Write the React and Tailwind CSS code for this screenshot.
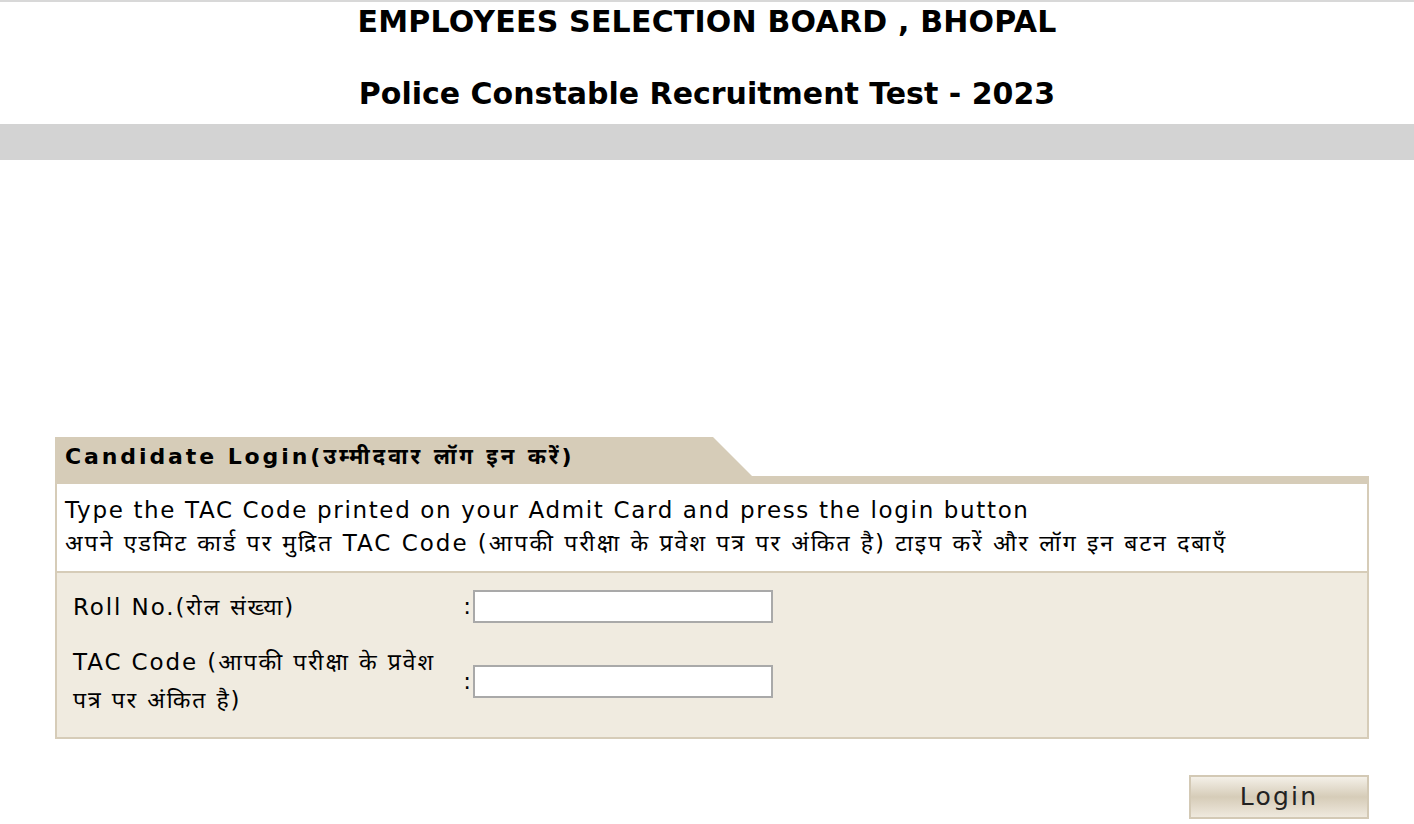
import React from "react";

export default function App() {
  return (
    <div className="min-h-screen bg-white text-black [font-family:'DejaVu_Sans','Noto_Sans',sans-serif]">
      <div className="h-[2px] bg-[#d8d8d8]" />
      <h1 className="mt-[5px] text-center text-[30px] font-bold leading-[30px] tracking-[0.2px]">
        EMPLOYEES SELECTION BOARD , BHOPAL
      </h1>
      <h2 className="mt-[42px] text-center text-[30px] font-bold leading-[30px]">
        Police Constable Recruitment Test - 2023
      </h2>
      <div className="mt-[15px] h-[36px] bg-[#d3d3d3]" />

      <div className="pl-[55px] pr-[45px] pt-[277px]">
        <div className="flex h-[39px] w-[697px] items-center bg-[#d6ccb8] pl-[10px] text-[22px] font-bold tracking-[2.9px] [clip-path:polygon(0_0,calc(100%-39px)_0,100%_100%,0_100%)]">
          Candidate Login(उम्मीदवार लॉग इन करें)
        </div>
        <div className="border-x-2 border-t-8 border-b-2 border-[#d6ccb8]">
          <div className="border-b-2 border-[#d6ccb8] bg-white px-[8px] pt-[10px] pb-[11px] text-[23px] leading-[33px] tracking-[1.65px]">
            <div>Type the TAC Code printed on your Admit Card and press the login button</div>
            <div className="tracking-[2px]">
              अपने एडमिट कार्ड पर मुद्रित TAC Code (आपकी परीक्षा के प्रवेश पत्र पर अंकित है) टाइप करें और लॉग इन बटन दबाएँ
            </div>
          </div>
          <div className="bg-[#f0ebe0] pl-[16px] pt-[17px] pb-[18px] text-[23px] tracking-[1.9px]">
            <div className="flex h-[33px] items-center">
              <div className="w-[388px] leading-[38px]">Roll No.(रोल संख्या)</div>
              <span className="w-[12px] text-center tracking-normal">:</span>
              <input className="h-[33px] w-[300px] border-2 border-[#a9a9a9] bg-white outline-none" />
            </div>
            <div className="mt-[20px] flex items-center">
              <div className="w-[388px] leading-[38px]">
                TAC Code (आपकी परीक्षा के प्रवेश
                <br />
                पत्र पर अंकित है)
              </div>
              <span className="w-[12px] text-center tracking-normal">:</span>
              <input className="h-[33px] w-[300px] border-2 border-[#a9a9a9] bg-white outline-none" />
            </div>
          </div>
        </div>
        <div className="mt-[36px] flex justify-end">
          <button className="h-[44px] w-[180px] border-2 border-[#d3c9b5] bg-gradient-to-b from-[#f4f0e8] via-[#d6ccb8] to-[#efe9de] text-[25px] tracking-[2.2px] text-[#222]">
            Login
          </button>
        </div>
      </div>
    </div>
  );
}
